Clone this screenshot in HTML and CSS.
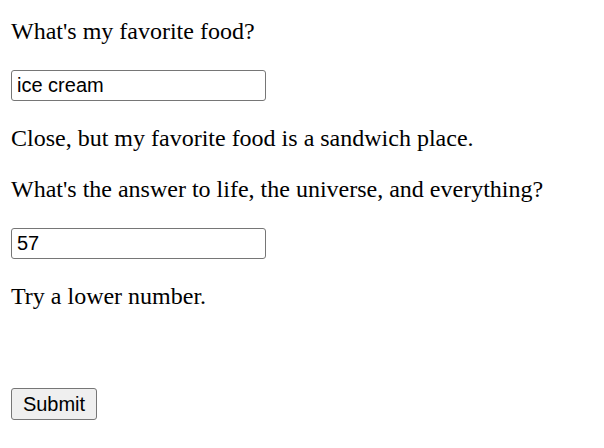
FILE: index.html
```html
<!DOCTYPE html>
<html>
<head>
<meta charset="utf-8">
<link rel="stylesheet" href="styles.css">
</head>
<body>
<form class="quiz">
  <p class="question">What's my favorite food?</p>
  <input class="answer" type="text" value="ice cream">
  <p class="feedback">Close, but my favorite food is a sandwich place.</p>
  <p class="question">What's the answer to life, the universe, and everything?</p>
  <input class="answer" type="text" value="57">
  <p class="feedback">Try a lower number.</p>
  <button class="submit" type="button">Submit</button>
</form>
</body>
</html>
```

FILE: styles.css
```css
html, body {
  margin: 0;
  padding: 0;
  background: #fff;
}

.quiz {
  display: flex;
  flex-direction: column;
  align-items: flex-start;
  gap: 24px;
  padding: 18px 11px 0 11px;
  font-family: "Liberation Serif", "Times New Roman", serif;
  font-size: 24px;
  color: #000;
}

.question,
.feedback {
  margin: 0;
  line-height: 27.6px;
}

.answer {
  box-sizing: border-box;
  width: 255px;
  height: 31px;
  margin: 0;
  padding: 1px 5px;
  border: 1px solid #767676;
  border-radius: 3px;
  font-family: "Liberation Sans", Arial, sans-serif;
  font-size: 20px;
  color: #000;
  background: #fff;
}

.submit {
  box-sizing: border-box;
  width: 86px;
  height: 32px;
  margin-top: 54px;
  padding: 0 9px;
  border: 1px solid #767676;
  border-radius: 3px;
  background: #efefef;
  font-family: "Liberation Sans", Arial, sans-serif;
  font-size: 20px;
  color: #000;
}
```
